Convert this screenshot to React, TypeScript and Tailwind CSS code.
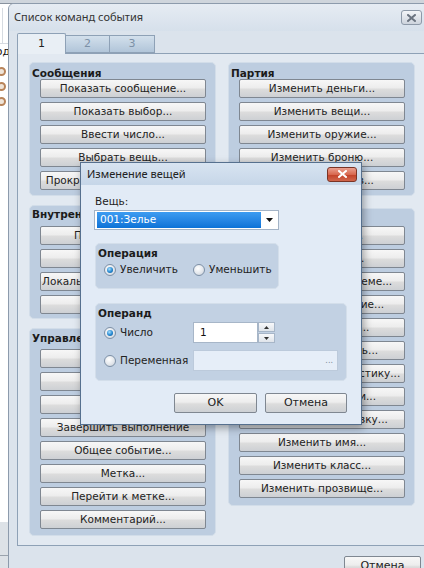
import React from "react";

const UI = "font-['DejaVu_Sans',sans-serif]";
const TITLE = "font-['Noto_Sans','Open_Sans',sans-serif]";

const messages = ["Показать сообщение...", "Показать выбор...", "Ввести число...", "Выбрать вещь...", "Прокручивающийся текст..."];
const party = ["Изменить деньги...", "Изменить вещи...", "Изменить оружие...", "Изменить броню...", "Изменить состав..."];
const internal = ["Переключатели...", "Переменные...", "Локальный переключатель...", "Таймер..."];
const flow = ["Условие...", "Цикл...", "Прервать цикл", "Завершить выполнение", "Общее событие...", "Метка...", "Перейти к метке...", "Комментарий..."];
const actor = [
  "Изменить ОЗ...",
  "Изменить ОМ...",
  "Восстановить в объеме...",
  "Изменить состояние...",
  "Изменить опыт...",
  "Изменить уровень...",
  "Изменить характеристику...",
  "Изменить навыки...",
  "Изменить экипировку...",
  "Изменить имя...",
  "Изменить класс...",
  "Изменить прозвище...",
];

function Btn({ children, className = "" }: { children: React.ReactNode; className?: string }) {
  return (
    <div
      className={`h-[19px] flex items-center justify-center rounded-[2px] border border-[#7f8791] bg-[linear-gradient(#f7f7f7,#ededed_45%,#dcdcdc_55%,#cdd0d4)] text-[10.5px] text-[#222] whitespace-nowrap overflow-hidden ${className}`}
    >
      {children}
    </div>
  );
}

function Group({
  title,
  items,
  pt,
  mb,
  pb,
}: {
  title: string;
  items: string[];
  pt: string;
  mb: string;
  pb: string;
}) {
  return (
    <div className={`rounded-[5px] bg-[#bdcde0] border border-[#d2dde9] pl-[10px] pr-[9px] ${pt} ${pb}`}>
      <div className={`h-[12px] leading-[12px] -ml-[8px] text-[10.5px] font-bold text-[#1b1b1b] whitespace-nowrap ${mb}`}>
        {title}
      </div>
      <div className="flex flex-col gap-[4px]">
        {items.map((t) => (
          <Btn key={t}>{t}</Btn>
        ))}
      </div>
    </div>
  );
}

function Radio({ checked }: { checked?: boolean }) {
  return (
    <span className="w-[12px] h-[12px] shrink-0 rounded-full border border-[#7d90a6] bg-[radial-gradient(circle_at_40%_35%,#ffffff,#e3e7ec_55%,#c3cbd5)] flex items-center justify-center">
      {checked && (
        <span className="w-[6px] h-[6px] rounded-full bg-[radial-gradient(circle_at_40%_35%,#a8e0ff,#2386cf_55%,#0c4f8c)]" />
      )}
    </span>
  );
}

function CloseX({ color }: { color: string }) {
  return (
    <svg width="9" height="8" viewBox="0 0 9 8">
      <path d="M1 1 L8 7 M8 1 L1 7" stroke={color} strokeWidth="2" strokeLinecap="square" />
    </svg>
  );
}

function Dialog() {
  return (
    <div
      className={`absolute left-[80px] top-[162px] w-[282px] h-[263px] border border-[#56708e] bg-[#e2ebf6] shadow-[2px_3px_8px_rgba(0,0,0,0.35)] ${UI}`}
    >
      {/* title bar */}
      <div className="h-[22px] flex items-center justify-between pl-[6px] pr-[4px] bg-linear-to-b from-[#d8e4f1] to-[#c6d6e8]">
        <span className={`text-[11px] text-[#222] ${TITLE}`}>Изменение вещей</span>
        <div className="w-[30px] h-[15px] rounded-[3px] border border-[#7b3425] bg-[linear-gradient(#eba08f,#d8684f_50%,#c3432a_55%,#d0664c)] flex items-center justify-center">
          <CloseX color="#ffffff" />
        </div>
      </div>

      <div className="pl-[13px] pt-[10px]">
        <div className="h-[12px] leading-[12px] ml-[1px] text-[10.5px] text-[#222]">Вещь:</div>

        {/* combo */}
        <div className="mt-[3px] w-[185px] h-[20px] bg-white border border-[#a3b3c6] flex items-center pl-[2px] py-[1px]">
          <div className="w-[164px] h-full bg-linear-to-b from-[#3d9cf1] to-[#0b72d7] text-white text-[10.5px] flex items-center pl-[3px]">
            001:Зелье
          </div>
          <div className="flex-1 flex justify-center">
            <svg width="7" height="4" viewBox="0 0 7 4">
              <path d="M0 0 H7 L3.5 4 Z" fill="#111" />
            </svg>
          </div>
        </div>

        {/* operation */}
        <div className="mt-[13px] ml-[1px] w-[184px] rounded-[5px] bg-[#c2d1e3] border border-[#d3deea] pl-[8px] pt-[3px] pb-[11px]">
          <div className="h-[12px] leading-[12px] -ml-[6px] text-[10.5px] font-bold text-[#1b1b1b]">Операция</div>
          <div className="mt-[4px] h-[14px] flex items-center">
            <Radio checked />
            <span className="ml-[4px] w-[73px] text-[10.5px] text-[#222]">Увеличить</span>
            <Radio />
            <span className="ml-[4px] text-[10.5px] text-[#222]">Уменьшить</span>
          </div>
        </div>

        {/* operand */}
        <div className="mt-[14px] ml-[1px] w-[252px] rounded-[5px] bg-[#c2d1e3] border border-[#d3deea] pl-[8px] pt-[3px] pb-[9px]">
          <div className="h-[12px] leading-[12px] -ml-[6px] text-[10.5px] font-bold text-[#1b1b1b]">Операнд</div>
          <div className="mt-[3px] h-[21px] flex items-center">
            <div className="w-[89px] flex items-center">
              <Radio checked />
              <span className="ml-[4px] text-[10.5px] text-[#222]">Число</span>
            </div>
            <div className="flex h-[21px] w-[82px]">
              <div className="w-[65px] bg-white border border-[#a7b6c8] flex items-center pl-[6px] text-[10.5px] text-[#111]">1</div>
              <div className="flex-1 flex flex-col gap-[1px]">
                <div className="flex-1 border border-[#a7b6c8] bg-linear-to-b from-[#f8f9fb] to-[#dfe4ea] flex items-center justify-center">
                  <svg width="5" height="3" viewBox="0 0 5 3">
                    <path d="M0 3 H5 L2.5 0 Z" fill="#333" />
                  </svg>
                </div>
                <div className="flex-1 border border-[#a7b6c8] bg-linear-to-b from-[#f8f9fb] to-[#dfe4ea] flex items-center justify-center">
                  <svg width="5" height="3" viewBox="0 0 5 3">
                    <path d="M0 0 H5 L2.5 3 Z" fill="#333" />
                  </svg>
                </div>
              </div>
            </div>
          </div>
          <div className="mt-[7px] h-[21px] flex items-center">
            <div className="w-[89px] flex items-center">
              <Radio />
              <span className="ml-[4px] text-[10.5px] text-[#222]">Переменная</span>
            </div>
            <div className="w-[145px] h-[21px] bg-[#e6eef8] border border-[#bccadb] flex items-center justify-end pr-[4px] text-[8px] text-[#7d8a99]">
              ...
            </div>
          </div>
        </div>
      </div>

      {/* buttons */}
      <div className="mt-[12px] flex justify-end gap-[8px] pr-[14px]">
        <Btn className="w-[83px] h-[20px] border-[#3c6f96] text-[11px]">OK</Btn>
        <Btn className="w-[82px] h-[20px] text-[11px]">Отмена</Btn>
      </div>
    </div>
  );
}

export default function App() {
  return (
    <div className={`relative w-[424px] h-[568px] overflow-hidden bg-white ${UI}`}>
      {/* window behind */}
      <div className="absolute left-0 top-0 w-full h-[4px] bg-[#cfd5dc] border-b border-[#88929e]" />
      <div className="absolute left-[2px] top-[8px] w-px h-[36px] bg-[#d6dbe1]" />
      <div className="absolute left-0 top-[43px] w-[10px] h-px bg-[#d6dbe1]" />
      <div className="absolute -left-[12px] top-[44px] text-[11px] text-[#111]">Код</div>
      {[67, 82, 97].map((y) => (
        <div key={y} className="absolute -left-[3px] w-[9px] h-[9px] rounded-full border-2 border-[#b8845a] bg-[#efe4d8]" style={{ top: y }} />
      ))}
      <div className="absolute left-0 top-[522px] w-[10px] h-[46px] bg-[#dde2e7]">
        <div className="mt-[33px] h-px bg-[#9aa3ad]" />
      </div>

      {/* main window */}
      <div className="absolute left-[8px] top-[3px] w-[422px] h-[590px] rounded-tl-[6px] border border-[#8d9bac] bg-[#dbe3ec] overflow-hidden">
        <div className="h-[27px] flex items-center pl-[5px] pr-[7px] bg-linear-to-b from-[#e6ecf3] to-[#d6e0eb]">
          <span className={`text-[11px] text-[#333] ${TITLE}`}>Список команд события</span>
          <div className="ml-auto w-[21px] h-[15px] rounded-[3px] border border-[#8d99a8] bg-linear-to-b from-[#f3f5f8] to-[#cdd4dd] flex items-center justify-center">
            <CloseX color="#6b7480" />
          </div>
        </div>

        <div className="pl-[8px] pt-[2px]">
          {/* tabs */}
          <div className="flex items-end h-[20px]">
            <div className="relative z-10 -mb-px w-[49px] h-[21px] border border-b-0 border-[#8ea1b6] bg-[#e9eff5] rounded-t-[2px] flex items-center justify-center text-[11px] text-[#222]">
              1
            </div>
            <div className="w-[44px] h-[18px] border border-l-0 border-[#8ea1b6] bg-linear-to-b from-[#d3e0ec] to-[#b1c5d9] flex items-center justify-center text-[11px] text-[#7c90a6]">
              2
            </div>
            <div className="w-[45px] h-[18px] border border-l-0 border-[#8ea1b6] bg-linear-to-b from-[#d3e0ec] to-[#b1c5d9] flex items-center justify-center text-[11px] text-[#7c90a6]">
              3
            </div>
          </div>

          {/* panel */}
          <div className="h-[493px] border border-[#8ea1b6] bg-[#e2e9f1] pl-[11px] pt-[8px]">
            <div className="grid grid-cols-[187px_187px] gap-x-[12px] items-start">
              <div className="flex flex-col gap-[9px]">
                <Group title="Сообщения" items={messages} pt="pt-[4px]" mb="mb-0" pb="pb-[5px]" />
                <Group title="Внутренние операции" items={internal} pt="pt-[2px]" mb="mb-[6px]" pb="pb-[4px]" />
                <Group title="Управление процессом" items={flow} pt="pt-[3px]" mb="mb-[5px]" pb="pb-[6px]" />
              </div>
              <div className="flex flex-col gap-[12px]">
                <Group title="Партия" items={party} pt="pt-[4px]" mb="mb-0" pb="pb-[5px]" />
                <Group title="Персонаж" items={actor} pt="pt-[3px]" mb="mb-[2px]" pb="pb-[7px]" />
              </div>
            </div>
          </div>

          {/* footer */}
          <div className="mt-[10px] pl-[327px]">
            <Btn className="w-[77px] h-[20px] text-[11px]">Отмена</Btn>
          </div>
        </div>
      </div>

      <Dialog />
    </div>
  );
}
